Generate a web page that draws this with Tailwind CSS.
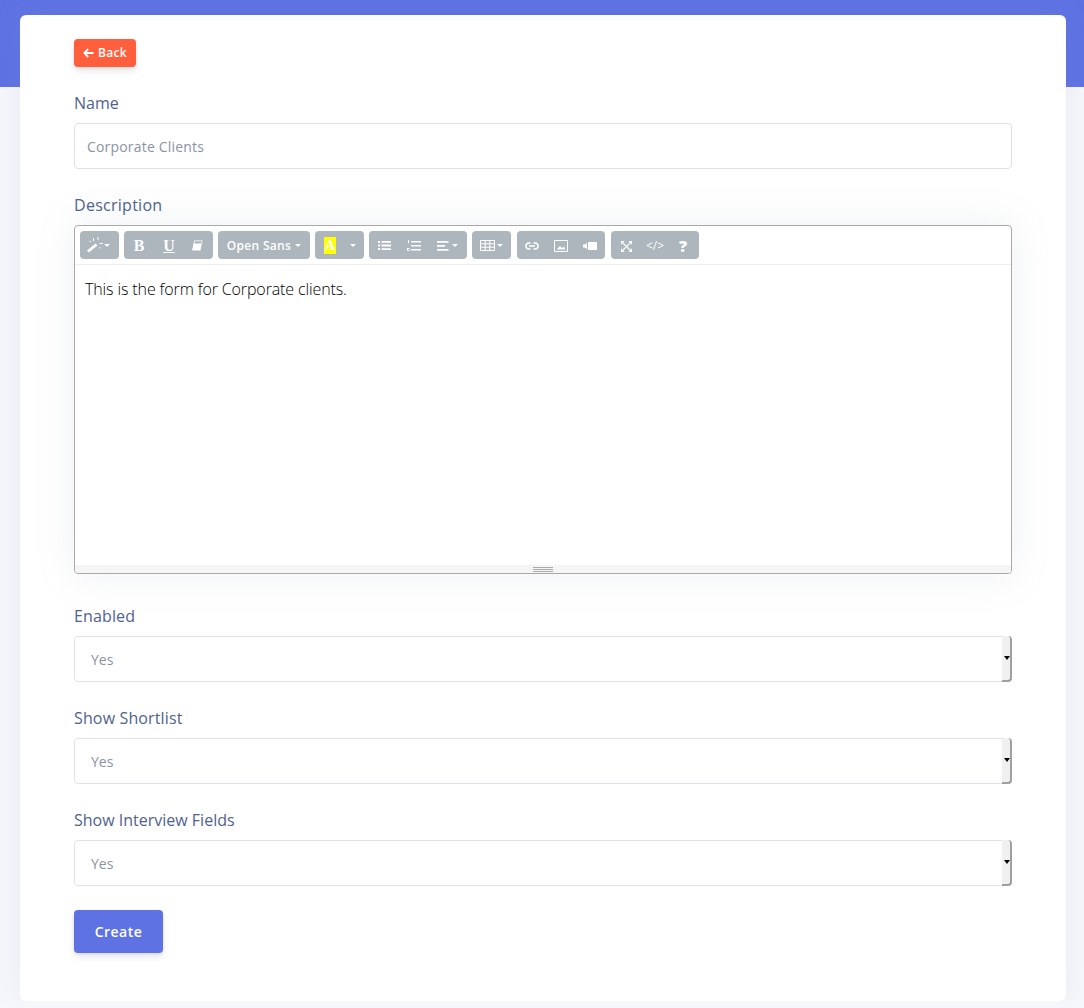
<!DOCTYPE html>
<html lang="en">
  <head>
    <meta charset="UTF-8" />
    <meta name="viewport" content="width=device-width, initial-scale=1.0" />
    <title>Create Form</title>
    <script src="https://cdn.jsdelivr.net/npm/@tailwindcss/browser@4"></script>
  </head>
  <body class="bg-[#f6f7fb] font-['Open_Sans',sans-serif] overflow-hidden">
    <div class="h-[87px] bg-[#5e72e4]"></div>

    <div class="mx-[18px] ml-[20px] -mt-[72px] h-[986px] rounded-md bg-white pl-[54px] pr-[54px] pt-[24px] shadow-[0_0_32px_rgba(136,152,170,0.12)]">
      <button class="flex h-[28px] w-[62px] items-center justify-center gap-[4px] rounded-[4px] bg-[#ff5f3c] text-[12px] font-semibold tracking-[0.3px] text-white shadow-[0_4px_6px_rgba(50,50,93,0.11),0_1px_3px_rgba(0,0,0,0.08)]">
        <svg width="11" height="10" viewBox="0 0 11 10" fill="none" stroke="white" stroke-width="1.8"><path d="M5.2 1 1.3 5l3.9 4M1.5 5h9" /></svg>
        Back
      </button>

      <label class="mt-[24px] block h-[24px] text-[16px] leading-[24px] text-[#4f6290]">Name</label>
      <div class="mt-[8px] flex h-[46px] items-center rounded-[4px] border border-[#dee2e6] px-[12px] text-[14px] tracking-[0.18px] text-[#8a93a6]">Corporate Clients</div>

      <label class="mt-[24px] block h-[24px] text-[16px] leading-[24px] tracking-[0.27px] text-[#4f6290]">Description</label>

      <!-- editor -->
      <div class="mt-[8px] h-[349px] rounded-[4px] border border-[#a9a9a9] shadow-[0_0_40px_rgba(136,152,170,0.15)]">
        <div class="flex h-[39px] items-start gap-[5px] border-b border-[#eeeeee] pl-[5px] pt-[5px]">
          <div class="flex h-[28px] w-[39px] items-center rounded-[4px] bg-[#adb5bd] pl-[7px]">
            <svg width="17" height="16" viewBox="0 0 17 16" fill="white">
              <path d="M0 13.500 8.500 6.500l2 2L1.800 15.500z" />
              <path d="M6 1h1v3H6zM10.500 0h1v3h-1zM12.500 6H16v1h-3.500zM2.500 4h1.500v1H2.500zM12.500 10h1v1.500h-1z" />
            </svg>
            <span class="h-0 w-0 border-x-[3px] border-t-[3px] border-x-transparent border-t-white"></span>
          </div>

          <div class="flex h-[28px] w-[89px] items-center rounded-[4px] bg-[#adb5bd] pt-px text-white">
            <span class="w-[30px] text-center font-['Liberation_Serif',serif] text-[16px] font-bold">B</span>
            <span class="w-[30px] text-center font-['Liberation_Serif',serif] text-[16px] font-bold underline">U</span>
            <svg class="ml-[7px]" width="12" height="11" viewBox="0 0 12 11" fill="white"><path d="M3.200.5H11.500L9.500 10.500H1z" /><path d="M3.800 1.200h6.800L10.200 3.500H3.400z" fill="#adb5bd" /></svg>
          </div>

          <div class="flex h-[28px] w-[92px] items-center justify-center gap-[4px] rounded-[4px] bg-[#adb5bd] pt-px text-[12px] font-semibold tracking-[0.3px] text-white">
            Open Sans
            <span class="h-0 w-0 border-x-[3px] border-t-[3px] border-x-transparent border-t-white"></span>
          </div>

          <div class="flex h-[28px] w-[49px] items-center rounded-[4px] bg-[#adb5bd] pl-[9px]">
            <span class="flex h-[17px] w-[12px] items-center justify-center bg-[#ffff00] font-['Liberation_Serif',serif] text-[15px] font-bold text-white">A</span>
            <span class="ml-[14px] h-0 w-0 border-x-[3px] border-t-[3px] border-x-transparent border-t-white"></span>
          </div>

          <div class="flex h-[28px] w-[98px] items-center rounded-[4px] bg-[#adb5bd] pl-[9px] pt-px">
            <svg width="13" height="11" viewBox="0 0 13 11" fill="white"><path d="M0 1h2v2H0zM0 4.500h2v2H0zM0 8h2v2H0zM3.500 1H13v1.800H3.500zM3.500 4.600H13v1.800H3.500zM3.500 8.200H13v1.800H3.500z" /></svg>
            <svg class="ml-[16px]" width="14" height="12" viewBox="0 0 14 12" fill="white"><path d="M1 0h1v3.200H1zM0 8h3v.8H1.200V10H3v.8H0zM4 1h10v1.600H4zM4 5h10v1.600H4zM4 9h10v1.600H4z" /></svg>
            <svg class="ml-[16px]" width="12" height="10" viewBox="0 0 12 10" fill="white"><path d="M0 0h11.500v1.700H0zM0 4h8v1.700H0zM0 8h11.500v1.700H0z" /></svg>
            <span class="ml-[3px] h-0 w-0 border-x-[3px] border-t-[3px] border-x-transparent border-t-white"></span>
          </div>

          <div class="flex h-[28px] w-[39px] items-center justify-center gap-[2px] rounded-[4px] bg-[#adb5bd] pt-px">
            <svg width="15" height="11" viewBox="0 0 15 11" fill="none" stroke="white" stroke-width="1"><path d="M.5.5h14v10H.5zM.5 3.800h14M.5 7.200h14M5.200.5v10M9.800.5v10" /></svg>
            <span class="h-0 w-0 border-x-[3px] border-t-[3px] border-x-transparent border-t-white"></span>
          </div>

          <div class="ml-px flex h-[28px] w-[88px] items-center rounded-[4px] bg-[#adb5bd] pl-[8px] pt-px">
            <svg width="14" height="8" viewBox="0 0 14 8" fill="none" stroke="white" stroke-width="1.500"><path d="M5.500 1H4a3 3 0 0 0 0 6h1.500M8.500 1H10a3 3 0 0 1 0 6H8.500M4 4h6" /></svg>
            <svg class="ml-[15px]" width="14" height="12" viewBox="0 0 14 12" fill="none"><path d="M.5.5h13v11H.5z" stroke="white" /><path d="M2.500 9.500 6 6l2 2 2-1.500 1.500 3z" fill="white" /></svg>
            <svg class="ml-[15px]" width="14" height="8" viewBox="0 0 14 8" fill="white"><path d="M5 0h9v8H5zM0 2.500h1.500L4 1v6L1.500 5.500H0z" /></svg>
          </div>

          <div class="ml-px flex h-[28px] w-[88px] items-center rounded-[4px] bg-[#adb5bd] pl-[10px] pt-[2px] text-white">
            <svg width="11" height="11" viewBox="0 0 12 12" fill="none" stroke="white" stroke-width="1.500"><path d="M1.500 1.500l9 9M10.500 1.500l-9 9" /><path d="M0 0h4L0 4zM12 0H8l4 4zM0 12h4l-4-4zM12 12H8l4-4z" fill="white" stroke="none" /></svg>
            <span class="ml-[14px] w-[18px] text-center text-[12px] font-medium">&lt;/&gt;</span>
            <span class="ml-[15px] text-[16px] font-extrabold leading-none">?</span>
          </div>
        </div>

        <div class="h-[300px] px-[10px] pt-[9px] text-[16px] font-light leading-[30px] tracking-[-0.12px] text-black">
          <p>This is the form for Corporate clients.</p>
        </div>

        <div class="flex h-[8px] flex-col items-center justify-center gap-[1px] rounded-b-[3px] bg-[#f5f5f5]">
          <span class="block h-px w-[20px] bg-[#a9a9a9]"></span>
          <span class="block h-px w-[20px] bg-[#a9a9a9]"></span>
          <span class="block h-px w-[20px] bg-[#a9a9a9]"></span>
        </div>
      </div>

      <label class="mt-[30px] block h-[24px] text-[16px] leading-[24px] tracking-[0.14px] text-[#4f6290]">Enabled</label>
      <div class="relative mt-[8px] flex h-[46px] items-center rounded-[4px] border border-[#dee2e6] pl-[16px] text-[14px] text-[#8a93a6]">
        Yes
        <span class="absolute -right-px -top-px -bottom-px flex w-[10px] items-center justify-end rounded-r-[4px] border-b-2 border-r-2 border-[#a0a0a0] bg-[#f0f0f0]"><span class="h-0 w-0 border-x-[3px] border-t-[4px] border-x-transparent border-t-black"></span></span>
      </div>

      <label class="mt-[24px] block h-[24px] text-[16px] leading-[24px] tracking-[0.14px] text-[#4f6290]">Show Shortlist</label>
      <div class="relative mt-[8px] flex h-[46px] items-center rounded-[4px] border border-[#dee2e6] pl-[16px] text-[14px] text-[#8a93a6]">
        Yes
        <span class="absolute -right-px -top-px -bottom-px flex w-[10px] items-center justify-end rounded-r-[4px] border-b-2 border-r-2 border-[#a0a0a0] bg-[#f0f0f0]"><span class="h-0 w-0 border-x-[3px] border-t-[4px] border-x-transparent border-t-black"></span></span>
      </div>

      <label class="mt-[24px] block h-[24px] text-[16px] leading-[24px] text-[#4f6290]">Show Interview Fields</label>
      <div class="relative mt-[8px] flex h-[46px] items-center rounded-[4px] border border-[#dee2e6] pl-[16px] text-[14px] text-[#8a93a6]">
        Yes
        <span class="absolute -right-px -top-px -bottom-px flex w-[10px] items-center justify-end rounded-r-[4px] border-b-2 border-r-2 border-[#a0a0a0] bg-[#f0f0f0]"><span class="h-0 w-0 border-x-[3px] border-t-[4px] border-x-transparent border-t-black"></span></span>
      </div>

      <button class="mt-[24px] h-[43px] w-[89px] rounded-[4px] bg-[#5e72e4] text-[14px] font-semibold tracking-[0.5px] text-white shadow-[0_4px_6px_rgba(50,50,93,0.11),0_1px_3px_rgba(0,0,0,0.08)]">Create</button>
    </div>
  </body>
</html>
